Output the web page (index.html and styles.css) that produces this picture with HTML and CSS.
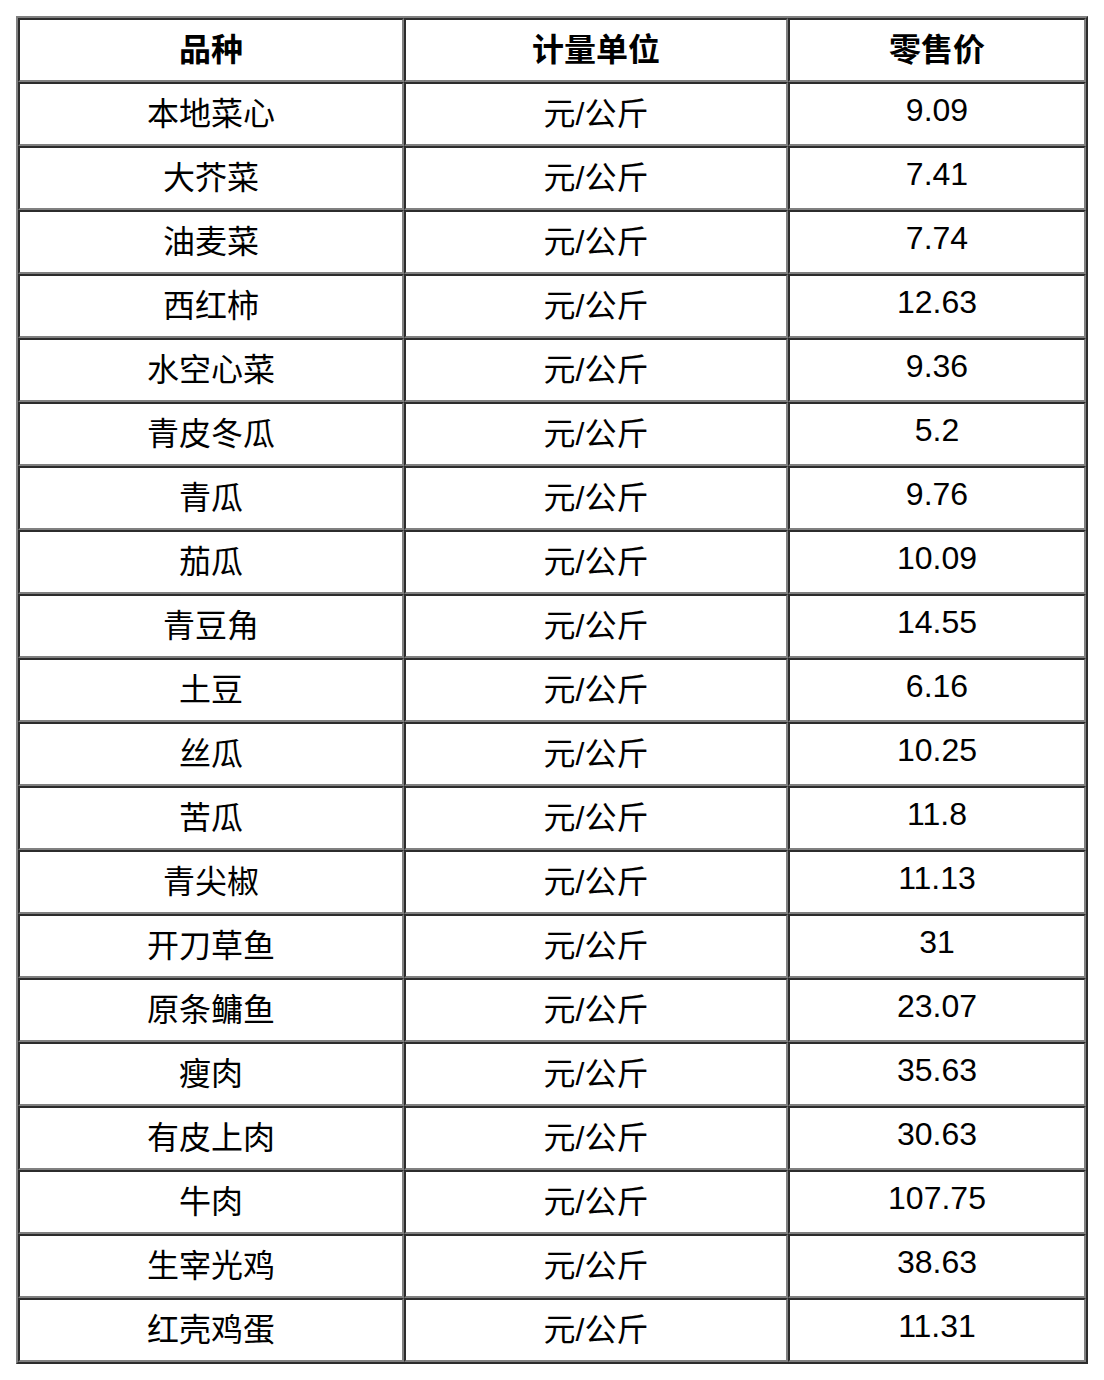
FILE: index.html
```html
<!DOCTYPE html>
<html lang="zh-CN">
<head>
<meta charset="utf-8">
<title>价格表</title>
<link rel="stylesheet" href="styles.css">
</head>
<body>
<table class="price-table">
  <colgroup>
    <col class="c1">
    <col class="c2">
    <col class="c3">
  </colgroup>
  <thead>
    <tr><th>品种</th><th>计量单位</th><th>零售价</th></tr>
  </thead>
  <tbody>
    <tr><td>本地菜心</td><td>元/公斤</td><td class="num">9.09</td></tr>
    <tr><td>大芥菜</td><td>元/公斤</td><td class="num">7.41</td></tr>
    <tr><td>油麦菜</td><td>元/公斤</td><td class="num">7.74</td></tr>
    <tr><td>西红柿</td><td>元/公斤</td><td class="num">12.63</td></tr>
    <tr><td>水空心菜</td><td>元/公斤</td><td class="num">9.36</td></tr>
    <tr><td>青皮冬瓜</td><td>元/公斤</td><td class="num">5.2</td></tr>
    <tr><td>青瓜</td><td>元/公斤</td><td class="num">9.76</td></tr>
    <tr><td>茄瓜</td><td>元/公斤</td><td class="num">10.09</td></tr>
    <tr><td>青豆角</td><td>元/公斤</td><td class="num">14.55</td></tr>
    <tr><td>土豆</td><td>元/公斤</td><td class="num">6.16</td></tr>
    <tr><td>丝瓜</td><td>元/公斤</td><td class="num">10.25</td></tr>
    <tr><td>苦瓜</td><td>元/公斤</td><td class="num">11.8</td></tr>
    <tr><td>青尖椒</td><td>元/公斤</td><td class="num">11.13</td></tr>
    <tr><td>开刀草鱼</td><td>元/公斤</td><td class="num">31</td></tr>
    <tr><td>原条鳙鱼</td><td>元/公斤</td><td class="num">23.07</td></tr>
    <tr><td>瘦肉</td><td>元/公斤</td><td class="num">35.63</td></tr>
    <tr><td>有皮上肉</td><td>元/公斤</td><td class="num">30.63</td></tr>
    <tr><td>牛肉</td><td>元/公斤</td><td class="num">107.75</td></tr>
    <tr><td>生宰光鸡</td><td>元/公斤</td><td class="num">38.63</td></tr>
    <tr><td>红壳鸡蛋</td><td>元/公斤</td><td class="num">11.31</td></tr>
  </tbody>
</table>
</body>
</html>
```

FILE: styles.css
```css
html, body {
  background: #ffffff;
}
body {
  margin: 16px;
  font-family: "Liberation Sans", "Noto Sans CJK SC", sans-serif;
  font-size: 32px;
  color: #000000;
}
.price-table {
  width: 1072px;
  table-layout: fixed;
  border-collapse: separate;
  border-spacing: 0;
  border-style: solid;
  border-width: 2px;
  border-color: #808080 #2c2c2c #2c2c2c #808080;
}
.c1 { width: 386px; }
.c2 { width: 384px; }
.c3 { width: 298px; }
.price-table th,
.price-table td {
  height: 56px;
  padding: 2px;
  text-align: center;
  vertical-align: middle;
  border-style: solid;
  border-width: 2px;
  border-color: #2c2c2c #808080 #808080 #2c2c2c;
  line-height: 40px;
  white-space: nowrap;
}
.price-table th {
  font-weight: bold;
}
.price-table td.num {
  height: 52px;
  padding: 0 2px 8px;
}
```
